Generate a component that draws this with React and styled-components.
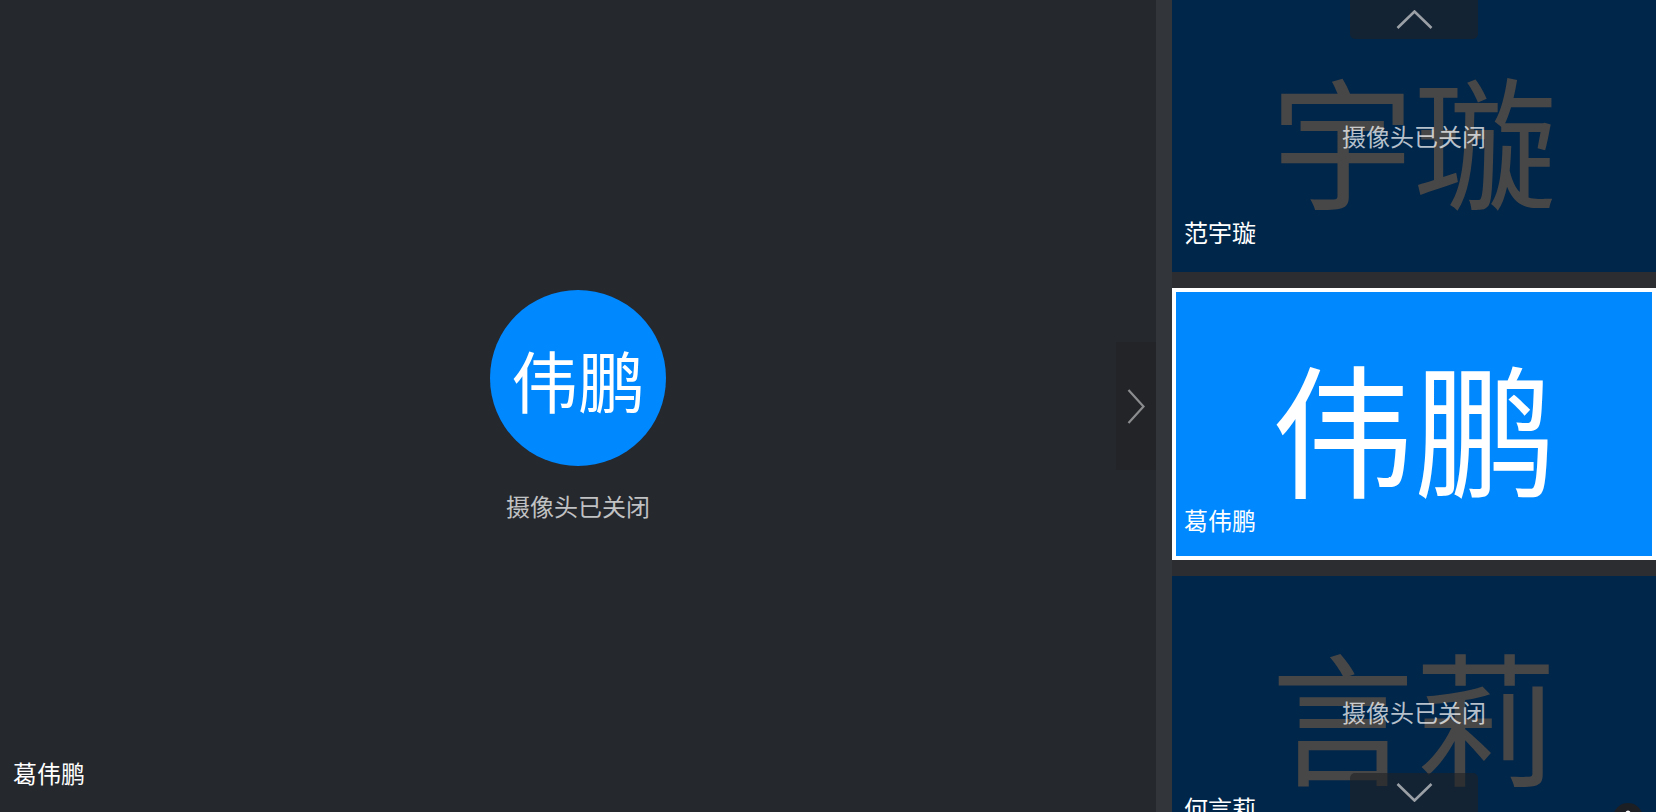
import React from "react";
import styled, { createGlobalStyle, css } from "styled-components";

const GlobalStyle = createGlobalStyle`
  html, body {
    margin: 0;
    padding: 0;
    background: #25282d;
    overflow: hidden;
  }
  * { box-sizing: border-box; }
  body {
    font-family: "Noto Sans CJK SC", "Noto Sans", sans-serif;
  }
`;

const Screen = styled.div`
  display: flex;
  width: 1656px;
  height: 812px;
  overflow: hidden;
`;

const Stage = styled.main`
  position: relative;
  flex: 1;
  display: flex;
  flex-direction: column;
  align-items: center;
  justify-content: center;
  gap: 28px;
  padding-bottom: 4px;
  background: #25282d;
`;

const Avatar = styled.div`
  width: 176px;
  height: 176px;
  border-radius: 50%;
  background: #0088ff;
  color: #ffffff;
  display: flex;
  align-items: center;
  justify-content: center;
  font-size: 67px;
  line-height: 1;
`;

const Caption = styled.div`
  color: rgba(255, 255, 255, 0.72);
  font-size: 24px;
  line-height: 1;
  white-space: nowrap;
`;

const NameLabel = styled.div`
  position: absolute;
  left: ${(p) => p.$left}px;
  bottom: ${(p) => p.$bottom}px;
  color: #ffffff;
  font-size: 24px;
  line-height: 1;
  white-space: nowrap;
`;

const ExpandButton = styled.button`
  position: absolute;
  right: 0;
  top: 50%;
  transform: translateY(-50%);
  width: 40px;
  height: 128px;
  border: none;
  padding: 0;
  background: #222428;
  display: flex;
  align-items: center;
  justify-content: center;
  cursor: pointer;
`;

const Divider = styled.div`
  width: 16px;
  background: #323539;
`;

const Sidebar = styled.aside`
  position: relative;
  width: 484px;
  height: 812px;
  overflow: hidden;
  background: #2b2d31;
`;

const TileList = styled.div`
  display: flex;
  flex-direction: column;
  gap: 16px;
`;

const Tile = styled.div`
  position: relative;
  flex: none;
  height: 272px;
  border: 4px solid transparent;
  background: #00264a;
  overflow: hidden;
  ${(p) =>
    p.$active &&
    css`
      border-color: #ffffff;
      background: #0088ff;
    `}
`;

const TileCenter = styled.div`
  position: absolute;
  inset: 0;
  display: grid;
  place-items: center;
  & > * {
    grid-area: 1 / 1;
  }
`;

const BigName = styled.div`
  font-size: 143px;
  line-height: 1;
  color: ${(p) => (p.$active ? "#ffffff" : "#474747")};
  white-space: nowrap;
`;

const ScrollButton = styled.button`
  position: absolute;
  left: 50%;
  transform: translateX(-50%);
  width: 128px;
  height: 39px;
  border: none;
  padding: 10px 0 0;
  background: rgba(32, 33, 36, 0.6);
  display: flex;
  justify-content: center;
  align-items: flex-start;
  cursor: pointer;
  ${(p) =>
    p.$dir === "up"
      ? css`
          top: 0;
          border-radius: 0 0 5px 5px;
        `
      : css`
          top: 773px;
          border-radius: 5px 5px 0 0;
        `}
`;

const MicBadge = styled.div`
  position: absolute;
  right: 9px;
  top: 223px;
  width: 30px;
  height: 30px;
  border-radius: 50%;
  background: #1c1f24;
  display: flex;
  align-items: center;
  justify-content: center;
`;

const Chevron = ({ dir }) => {
  if (dir === "right") {
    return (
      <svg width="18" height="35" viewBox="0 0 18 35">
        <polyline points="1.5,1 16.5,17.5 1.5,34" fill="none" stroke="#8b8c8e" strokeWidth="2.2" />
      </svg>
    );
  }
  const pts = dir === "up" ? "1.5,18 18.5,1.5 35.5,18" : "1.5,1 18.5,17.5 35.5,1";
  return (
    <svg width="37" height="19" viewBox="0 0 37 19">
      <polyline points={pts} fill="none" stroke="#9ba0a6" strokeWidth="2.6" />
    </svg>
  );
};

const participants = [
  { full: "范宇璇", short: "宇璇" },
  { full: "葛伟鹏", short: "伟鹏", active: true },
  { full: "何言莉", short: "言莉", mic: true },
];

export default function App() {
  return (
    <>
      <GlobalStyle />
      <Screen>
        <Stage>
          <Avatar>伟鹏</Avatar>
          <Caption>摄像头已关闭</Caption>
          <NameLabel $left={13} $bottom={27}>
            葛伟鹏
          </NameLabel>
          <ExpandButton aria-label="展开">
            <Chevron dir="right" />
          </ExpandButton>
        </Stage>
        <Divider />
        <Sidebar>
          <TileList>
            {participants.map((p) => (
              <Tile key={p.full} $active={p.active}>
                <TileCenter>
                  <BigName $active={p.active}>{p.short}</BigName>
                  {!p.active && <Caption>摄像头已关闭</Caption>}
                </TileCenter>
                <NameLabel $left={8} $bottom={24}>
                  {p.full}
                </NameLabel>
                {p.mic && (
                  <MicBadge>
                    <svg width="12" height="16" viewBox="0 0 12 16">
                      <rect x="3.5" y="0.5" width="5" height="9" rx="2.5" fill="#ffffff" />
                      <path d="M1.5 7 a4.5 4.5 0 0 0 9 0 M6 11.5 V15" fill="none" stroke="#ffffff" strokeWidth="1.4" />
                    </svg>
                  </MicBadge>
                )}
              </Tile>
            ))}
          </TileList>
          <ScrollButton $dir="up" aria-label="上一页">
            <Chevron dir="up" />
          </ScrollButton>
          <ScrollButton $dir="down" aria-label="下一页">
            <Chevron dir="down" />
          </ScrollButton>
        </Sidebar>
      </Screen>
    </>
  );
}
